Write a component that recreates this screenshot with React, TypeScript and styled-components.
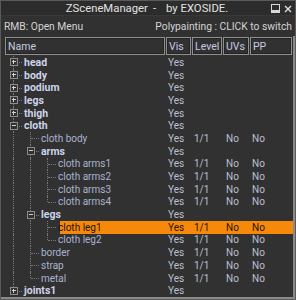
import styled, { createGlobalStyle } from 'styled-components';

const GlobalStyle = createGlobalStyle`
    html, body {
        margin: 0;
        padding: 0;
        background: #2f2f2f;
    }
    * {
        box-sizing: border-box;
    }
`;

const ROW_H = 12.7;
const INDENT = 17;

type Node = {
    name: string;
    level: number;
    bold?: boolean;
    open?: boolean;
    closed?: boolean;
    values?: boolean;
    selected?: boolean;
    lines: boolean[]; // ancestor pass-through lines, one per level below this one
    last?: boolean;
};

const nodes: Node[] = [
    { name: 'head', level: 0, bold: true, closed: true, lines: [] },
    { name: 'body', level: 0, bold: true, closed: true, lines: [] },
    { name: 'podium', level: 0, bold: true, closed: true, lines: [] },
    { name: 'legs', level: 0, bold: true, closed: true, lines: [] },
    { name: 'thigh', level: 0, bold: true, closed: true, lines: [] },
    { name: 'cloth', level: 0, bold: true, open: true, lines: [] },
    { name: 'cloth body', level: 1, values: true, lines: [true] },
    { name: 'arms', level: 1, bold: true, open: true, lines: [true] },
    { name: 'cloth arms1', level: 2, values: true, lines: [true, true] },
    { name: 'cloth arms2', level: 2, values: true, lines: [true, true] },
    { name: 'cloth arms3', level: 2, values: true, lines: [true, true] },
    { name: 'cloth arms4', level: 2, values: true, lines: [true, true], last: true },
    { name: 'legs', level: 1, bold: true, open: true, lines: [true] },
    { name: 'cloth leg1', level: 2, values: true, selected: true, lines: [true, true] },
    { name: 'cloth leg2', level: 2, values: true, lines: [true, true], last: true },
    { name: 'border', level: 1, values: true, lines: [true] },
    { name: 'strap', level: 1, values: true, lines: [true] },
    { name: 'metal', level: 1, values: true, lines: [true], last: true },
    { name: 'joints1', level: 0, bold: true, closed: true, lines: [], last: true },
];

const Window = styled.div`
    width: 296px;
    height: 300px;
    display: flex;
    flex-direction: column;
    background: #313131;
    border: 1px solid #5a5a5a;
    font-family: Roboto, "Liberation Sans", sans-serif;
    font-size: 10px;
    color: #c9cfdc;
    overflow: hidden;
`;

const TitleBar = styled.div`
    height: 15px;
    flex: none;
    display: flex;
    align-items: center;
    justify-content: center;
    position: relative;
    padding-right: 2px;
    background: #2c2c2c;
    border-bottom: 1px solid #383838;
    color: #e2e2e2;
    font-size: 11.3px;
`;

const TitlePart = styled.span<{ $gap: number }>`
    margin-left: ${(p) => p.$gap}px;
`;

const TitleButtons = styled.div`
    position: absolute;
    right: 3px;
    top: 3px;
    display: flex;
    gap: 4px;
    align-items: center;
`;

const InfoBar = styled.div`
    height: 20px;
    flex: none;
    display: flex;
    align-items: center;
    justify-content: space-between;
    padding: 0 3px 0 3px;
    color: #d4d4d4;
    font-size: 10.3px;
`;

const Panel = styled.div`
    flex: 1;
    margin: 0 0 1px 0;
    padding: 1px 0 0 4px;
    border-right: 2px solid #8a8a8a;
    border-bottom: 2px solid #8a8a8a;
    display: flex;
    flex-direction: column;
`;

const Header = styled.div`
    display: flex;
    gap: 1px;
    height: 18px;
    padding-right: 1px;
`;

const HeadCell = styled.div<{ $w: number; $grow?: boolean }>`
    width: ${(p) => p.$w}px;
    flex: ${(p) => (p.$grow ? 1 : 'none')};
    border: 1px solid #8f8f8f;
    box-shadow: inset 0 0 0 1px #242424;
    display: flex;
    align-items: center;
    padding-left: 2px;
    color: #c4cbe0;
    font-size: 10.5px;
`;

const List = styled.div`
    padding-top: 1px;
    display: flex;
    flex-direction: column;
`;

const Row = styled.div<{ $selected?: boolean }>`
    height: ${ROW_H}px;
    display: flex;
    align-items: stretch;
    position: relative;
    color: ${(p) => (p.$selected ? '#1c1404' : '#b9c0d2')};
`;

const Guide = styled.div<{ $through?: boolean }>`
    width: ${INDENT}px;
    flex: none;
    position: relative;
    &::before {
        content: '';
        display: ${(p) => (p.$through ? 'block' : 'none')};
        position: absolute;
        left: 8px;
        top: 0;
        bottom: 0;
        border-left: 1px dotted #777;
    }
`;

const Connector = styled.div<{ $last?: boolean }>`
    width: ${INDENT}px;
    flex: none;
    position: relative;
    &::before {
        content: '';
        position: absolute;
        left: 8px;
        top: 0;
        height: ${(p) => (p.$last ? '50%' : '100%')};
        border-left: 1px dotted #777;
    }
    &::after {
        content: '';
        position: absolute;
        left: 9px;
        right: 0;
        top: 50%;
        border-top: 1px dotted #777;
    }
`;

const Expander = styled.div<{ $open?: boolean }>`
    position: absolute;
    left: 5px;
    top: 50%;
    margin-top: -4px;
    width: 8px;
    height: 8px;
    border: 1px solid #8c8c8c;
    background: #313131;
    z-index: 1;
    &::before {
        content: '';
        position: absolute;
        left: 1px;
        right: 1px;
        top: 2px;
        border-top: 1px solid #d0d0d0;
    }
    &::after {
        content: '';
        display: ${(p) => (p.$open ? 'none' : 'block')};
        position: absolute;
        top: 1px;
        bottom: 1px;
        left: 2px;
        border-left: 1px solid #d0d0d0;
    }
`;

const NameCell = styled.div<{ $level: number }>`
    width: ${(p) => 161 - (p.$level + 1) * INDENT}px;
    flex: none;
    display: flex;
    align-items: center;
    padding-left: 2px;
    position: relative;
`;

const Label = styled.span<{ $bold?: boolean; $selected?: boolean }>`
    font-weight: ${(p) => (p.$bold ? 700 : 400)};
    font-size: ${(p) => (p.$bold ? '10.5px' : '10px')};
    color: ${(p) => (p.$selected ? '#1c1404' : p.$bold ? '#ccd4ea' : '#a9b4cf')};
`;

const Highlight = styled.div`
    position: absolute;
    left: 55px;
    right: 0;
    top: 0;
    bottom: 0;
    background: #f7890a;
`;

const ValueCell = styled.div<{ $w: number }>`
    width: ${(p) => p.$w}px;
    flex: none;
    display: flex;
    align-items: center;
    padding-left: 2px;
    position: relative;
`;

const headCols = [
    { label: 'Vis', w: 25 },
    { label: 'Level', w: 30 },
    { label: 'UVs', w: 26 },
    { label: 'PP', w: 40 },
];

const valueCols = [26, 32, 26, 40];

function MinIcon() {
    return (
        <svg width="9" height="9" viewBox="0 0 9 9">
            <rect x="0.5" y="0.5" width="8" height="8" fill="none" stroke="#d8d8d8" />
            <rect x="1" y="6" width="7" height="2" fill="#d8d8d8" />
        </svg>
    );
}

function CloseIcon() {
    return (
        <svg width="8" height="8" viewBox="0 0 8 8">
            <path d="M1 1 L7 7 M7 1 L1 7" stroke="#e0e0e0" strokeWidth="1.4" />
        </svg>
    );
}

function TreeRow({ node }: { node: Node }) {
    const hasKids = node.open || node.closed;
    const cells = node.values ? ['Yes', '1/1', 'No', 'No'] : ['Yes', '', '', ''];
    return (
        <Row $selected={node.selected}>
            {node.selected && <Highlight />}
            {node.lines.map((through, i) => (
                <Guide key={i} $through={through} />
            ))}
            <Connector $last={node.last}>
                {hasKids && <Expander $open={node.open} />}
            </Connector>
            <NameCell $level={node.level}>
                <Label $bold={node.bold} $selected={node.selected}>
                    {node.name}
                </Label>
            </NameCell>
            {cells.map((text, i) => (
                <ValueCell key={i} $w={valueCols[i]}>
                    {text}
                </ValueCell>
            ))}
        </Row>
    );
}

export default function App() {
    return (
        <>
            <GlobalStyle />
            <Window>
                <TitleBar>
                    <span>ZSceneManager</span>
                    <TitlePart $gap={5}>-</TitlePart>
                    <TitlePart $gap={10}>by EXOSIDE.</TitlePart>
                    <TitleButtons>
                        <MinIcon />
                        <CloseIcon />
                    </TitleButtons>
                </TitleBar>
                <InfoBar>
                    <span>RMB: Open Menu</span>
                    <span>Polypainting : CLICK to switch</span>
                </InfoBar>
                <Panel>
                    <Header>
                        <HeadCell $w={160}>Name</HeadCell>
                        {headCols.map((c) => (
                            <HeadCell key={c.label} $w={c.w} $grow={c.label === 'PP'}>
                                {c.label}
                            </HeadCell>
                        ))}
                    </Header>
                    <List>
                        {nodes.map((n, i) => (
                            <TreeRow key={i} node={n} />
                        ))}
                    </List>
                </Panel>
            </Window>
        </>
    );
}
